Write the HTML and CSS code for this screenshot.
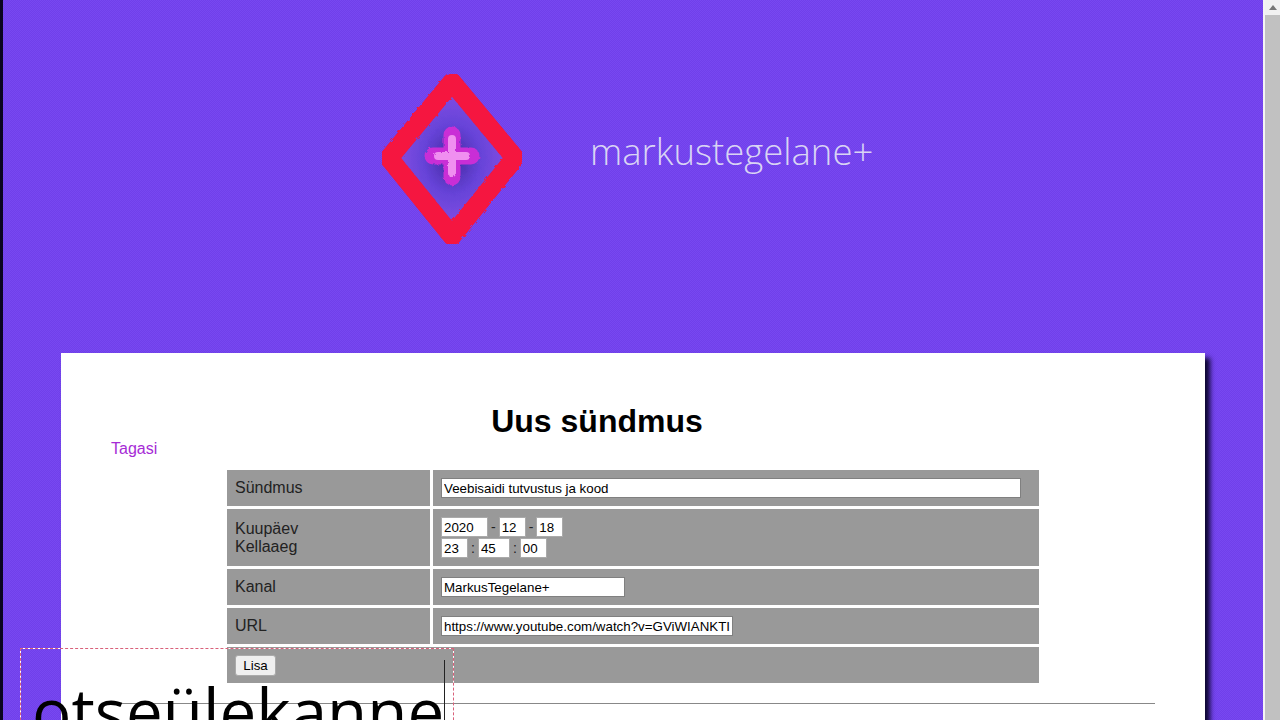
FILE: index.html
```html
<!DOCTYPE html>
<html lang="et">
<head>
    <meta charset="UTF-8">
    <meta name="viewport" content="width=device-width, initial-scale=1.0">
    <title>Uus sündmus</title>
    <link rel="stylesheet" href="styles.css">
</head>
<body>

<div class="page">
    <header class="banner">
        <svg class="logo-mark" width="150" height="180" viewBox="0 0 150 180" aria-hidden="true">
            <defs>
                <radialGradient id="logo-fill">
                    <stop offset="0" stop-color="#43289f"/>
                    <stop offset="0.45" stop-color="#6643d8"/>
                    <stop offset="0.75" stop-color="#7a4ae0"/>
                    <stop offset="1" stop-color="#b0429f"/>
                </radialGradient>
                <filter id="logo-rough" x="-5%" y="-5%" width="110%" height="110%">
                    <feTurbulence type="fractalNoise" baseFrequency="0.25" numOctaves="2" seed="4"/>
                    <feDisplacementMap in="SourceGraphic" scale="3"/>
                </filter>
            </defs>
            <g filter="url(#logo-rough)">
                <polygon points="76,13 139,89 76,167 13,89" fill="url(#logo-fill)" stroke="#f5133f" stroke-width="19" stroke-linejoin="round"/>
                <path d="M76 66V108M57 87H95" fill="none" stroke="#c92fd6" stroke-width="17" stroke-linecap="round"/>
                <path d="M76 70V104M62 87H90" fill="none" stroke="#f08ff0" stroke-width="8" stroke-linecap="round"/>
            </g>
        </svg>
        <span class="logo-text">markustegelane+</span>
    </header>

    <main class="content">
        <h1>Uus sündmus</h1>
        <a class="back-link" href="#">Tagasi</a>

        <table class="event-table">
            <tr>
                <td>Sündmus</td>
                <td><input class="field field-title" type="text" value="Veebisaidi tutvustus ja kood"></td>
            </tr>
            <tr class="row-date">
                <td>Kuupäev<br>Kellaaeg</td>
                <td>
                    <div class="date-row">
                        <input class="field num-year" type="text" value="2020"> -
                        <input class="field num-short" type="text" value="12"> -
                        <input class="field num-short" type="text" value="18">
                    </div>
                    <div class="date-row">
                        <input class="field num-short" type="text" value="23"> :
                        <input class="field num-mid" type="text" value="45"> :
                        <input class="field num-short" type="text" value="00">
                    </div>
                </td>
            </tr>
            <tr>
                <td>Kanal</td>
                <td><input class="field field-channel" type="text" value="MarkusTegelane+"></td>
            </tr>
            <tr>
                <td>URL</td>
                <td><input class="field field-url" type="text" value="https://www.youtube.com/watch?v=GViWIANKTI"></td>
            </tr>
            <tr>
                <td colspan="2"><button class="btn-add">Lisa</button></td>
            </tr>
        </table>

        <hr class="divider">
    </main>
</div>

<div class="scrollbar">
    <span class="scroll-arrow"></span>
    <span class="scroll-thumb"></span>
</div>

<div class="text-box">
    <span class="text-box-label">otseülekanne</span>
    <span class="text-caret"></span>
</div>

</body>
</html>
```

FILE: styles.css
```css
html, body {
    height: 100%;
}

body {
    margin: 0;
    overflow: hidden;
    font-family: "Liberation Sans", Arial, sans-serif;
    color: #222;
    display: flex;
    background-color: #fff;
}

.page {
    flex: 1;
    height: 100%;
    overflow: hidden;
    border-left: 3px solid #0a0420;
    background-color: #7443ee;
    background-image: repeating-conic-gradient(#7848f1 0 25%, #7040ea 0 50%);
    background-size: 2px 2px;
}

.banner {
    height: 353px;
    box-sizing: border-box;
    padding: 69px 0 0 373px;
    display: flex;
    align-items: flex-start;
}

.logo-mark {
    display: block;
}

.logo-text {
    margin: 60px 0 0 64px;
    font-family: "Open Sans", sans-serif;
    font-weight: 300;
    font-size: 36.5px;
    line-height: 44px;
    color: #d9d4f4;
}

.content {
    width: 1144px;
    height: 500px;
    margin-left: 58px;
    box-sizing: border-box;
    padding: 48px 50px 0;
    background-color: #fff;
    box-shadow: 5px 5px 5px #0d0630;
}

h1 {
    margin: 0;
    text-align: center;
    font-size: 32px;
    line-height: 40px;
    color: #000;
    padding-right: 72px;
}

.back-link {
    display: block;
    font-size: 16px;
    line-height: 18px;
    margin-top: -1px;
    color: #a62bd6;
    text-decoration: none;
}

.event-table {
    width: 818px;
    margin: 9px 0 0 113px;
    border-spacing: 3px;
    font-size: 16px;
}

.event-table td {
    background-color: #999;
    padding: 0 8px;
    height: 36px;
    line-height: 18px;
}

.event-table td:first-child {
    width: 187px;
}

.event-table .row-date td {
    height: 57px;
}

.field {
    box-sizing: border-box;
    height: 20px;
    margin: 0;
    padding: 1px 2px;
    border: 1px solid #aaa;
    background-color: #fff;
    font-family: "Liberation Sans", Arial, sans-serif;
    font-size: 13.33px;
    color: #000;
    vertical-align: middle;
}

.field-title {
    width: 580px;
    border-color: #808080;
}

.field-channel {
    width: 184px;
    border-color: #808080;
}

.field-url {
    width: 292px;
    border-color: #808080;
}

.num-year {
    width: 47px;
}

.num-short {
    width: 27px;
}

.num-mid {
    width: 32px;
}

.date-row {
    height: 21px;
    font-size: 14px;
    display: flex;
    align-items: center;
    gap: 3px;
}

.btn-add {
    height: 21px;
    width: 41px;
    padding: 0;
    border: 1px solid #aaa;
    border-radius: 3px;
    background-color: #efefef;
    font-family: "Liberation Sans", Arial, sans-serif;
    font-size: 13.33px;
    color: #000;
    display: block;
}

.divider {
    margin: 17px 0 0;
    border: 0;
    border-top: 1px solid #888;
}

.scrollbar {
    width: 15px;
    height: 100%;
    flex: none;
    border-left: 2px solid #f4f4f4;
    background-color: #f1f1f1;
    display: flex;
    flex-direction: column;
    align-items: center;
}

.scroll-arrow {
    margin-top: 5px;
    border-left: 4px solid transparent;
    border-right: 4px solid transparent;
    border-bottom: 5px solid #777;
}

.scroll-thumb {
    width: 100%;
    flex: 1;
    margin-top: 5px;
    background-color: #c1c1c1;
}

.text-box {
    position: absolute;
    left: 20px;
    top: 648px;
    width: 432px;
    height: 100px;
    border: 1px solid #fff;
}

.text-box::before {
    content: "";
    position: absolute;
    top: -1px;
    right: -1px;
    bottom: -1px;
    left: -1px;
    border: 1px dashed #d9607a;
}

.text-box-label {
    position: absolute;
    left: 11px;
    top: 22px;
    font-family: "Open Sans", sans-serif;
    font-size: 65.5px;
    line-height: 80px;
    color: #000;
}

.text-caret {
    position: absolute;
    left: 423px;
    top: 11px;
    width: 1px;
    height: 70px;
    background-color: #222;
}
```
